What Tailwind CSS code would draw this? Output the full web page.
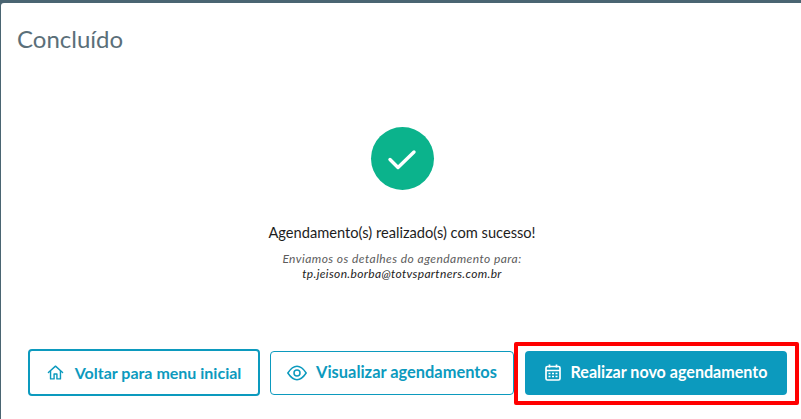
<!DOCTYPE html>
<html lang="pt-BR">
<head>
    <meta charset="UTF-8">
    <title>Concluído</title>
    <script src="https://cdn.jsdelivr.net/npm/@tailwindcss/browser@4"></script>
</head>
<body class="bg-[#4a6572] font-['Lato','Open_Sans',sans-serif] overflow-hidden">
    <div class="w-[801px] h-[419px] pt-[3px] pl-px">
        <div class="h-[416px] bg-white rounded-tl-[3px] flex flex-col">
            <!-- Header -->
            <h1 class="pl-4 pt-[21px] text-[24px] leading-[30px] font-normal text-[#5b6f79]">Concluído</h1>

            <!-- Mensagem -->
            <div class="flex flex-col items-center pt-[73px] ml-[2px]">
                <div class="w-[63px] h-[63px] rounded-full bg-[#0bb38c] flex items-center justify-center">
                    <svg width="32" height="32" viewBox="0 0 32 32" fill="none" stroke="white" stroke-width="3.4" stroke-linecap="round" stroke-linejoin="round">
                        <path d="M4 16.5 L12 24.5 L28 9"/>
                    </svg>
                </div>
                <p class="mt-[33px] text-[14.65px] leading-[20px] text-[#1d1d1d]">Agendamento(s) realizado(s) com sucesso!</p>
                <p class="mt-[8px] text-[12px] leading-[15px] tracking-[0.45px] italic text-[#5c5c5c]">Enviamos os detalhes do agendamento para:</p>
                <p class="text-[12px] leading-[15px] tracking-[0.35px] italic text-[#1d1d1d]">tp.jeison.borba@totvspartners.com.br</p>
            </div>

            <!-- Botoes -->
            <div class="mt-[68px] ml-[27px] flex items-center">
                <button class="w-[232px] h-[47px] rounded-[4px] border-2 border-[#0c9abe] bg-white text-[#0c9abe] flex items-center justify-center gap-[11px] text-[16px] font-bold">
                    <svg width="17" height="17" viewBox="0 0 24 24" fill="none" stroke="currentColor" stroke-width="2" stroke-linejoin="round" stroke-linecap="round">
                        <path d="M2 12 L12 3 L22 12"/>
                        <path d="M5 10 V21 H10 V14 H14 V21 H19 V10"/>
                    </svg>
                    Voltar para menu inicial
                </button>
                <button class="ml-[10px] w-[244px] h-[44px] rounded-[4px] border border-[#0c9abe] bg-white text-[#0c9abe] flex items-center justify-center gap-[9px] text-[16.4px] font-bold">
                    <svg width="20" height="16" viewBox="0 0 24 18" fill="none" stroke="currentColor" stroke-width="1.8">
                        <path d="M1 9 C5 3 8.5 1 12 1 C15.5 1 19 3 23 9 C19 15 15.5 17 12 17 C8.5 17 5 15 1 9 Z"/>
                        <circle cx="12" cy="9" r="3.6"/>
                    </svg>
                    Visualizar agendamentos
                </button>
                <div class="relative ml-[11px]">
                    <button class="w-[262px] h-[44px] rounded-[4px] bg-[#0c9abe] text-white flex items-center justify-center gap-[10px] text-[16.1px] font-bold">
                        <svg width="16" height="17" viewBox="0 0 16 17" fill="none" stroke="currentColor" stroke-width="1.7">
                            <rect x="1" y="2.5" width="14" height="13.5" rx="1.5"/>
                            <path d="M1 6.5 H15 M4.5 0.5 V3.5 M11.5 0.5 V3.5"/>
                            <path d="M3.5 9.5 H12.5 M3.5 12.5 H12.5" stroke-dasharray="2 1.5"/>
                        </svg>
                        Realizar novo agendamento
                    </button>
                    <div class="absolute -left-[11px] -top-[9px] w-[285px] h-[63px] border-4 border-[#ff0000] rounded-[2px]"></div>
                </div>
            </div>
        </div>
    </div>
</body>
</html>
